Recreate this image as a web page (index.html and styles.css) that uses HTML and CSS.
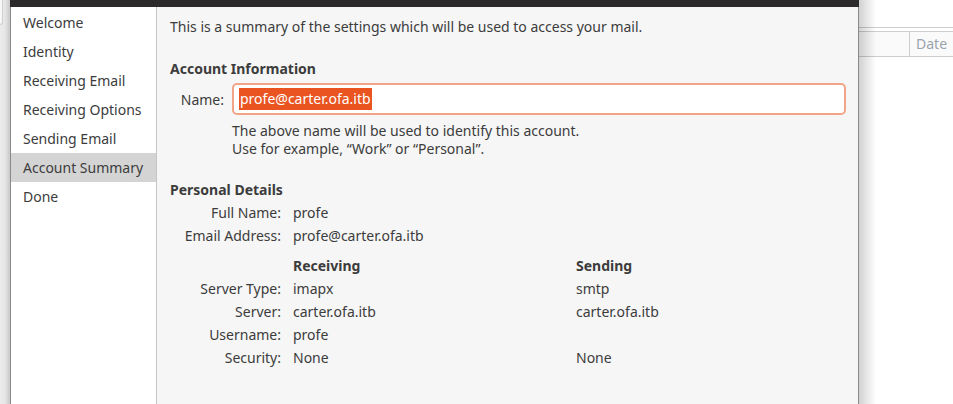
FILE: index.html
```html
<!DOCTYPE html>
<html>
<head>
<meta charset="utf-8">
<link rel="stylesheet" href="styles.css">
</head>
<body>
<div class="screen">
  <div class="bg-left"><div class="bg-box"></div></div>
  <div class="dialog">
    <div class="titlebar"></div>
    <div class="dialog-body">
      <ul class="sidebar">
        <li>Welcome</li>
        <li>Identity</li>
        <li>Receiving Email</li>
        <li>Receiving Options</li>
        <li>Sending Email</li>
        <li class="active">Account Summary</li>
        <li>Done</li>
      </ul>
      <div class="content">
        <p class="intro">This is a summary of the settings which will be used to access your mail.</p>
        <h2 class="section first">Account Information</h2>
        <div class="name-row">
          <label class="name-label">Name:</label>
          <div class="input"><span class="sel">profe@carter.ofa.itb</span></div>
        </div>
        <p class="hint">The above name will be used to identify this account.<br>Use for example, “Work” or “Personal”.</p>
        <h2 class="section">Personal Details</h2>
        <div class="details">
          <span class="lbl">Full Name:</span><span class="val">profe</span><span></span>
          <span class="lbl">Email Address:</span><span class="val">profe@carter.ofa.itb</span><span></span>
          <span class="lbl"></span><span class="val head">Receiving</span><span class="val head">Sending</span>
          <span class="lbl">Server Type:</span><span class="val">imapx</span><span class="val">smtp</span>
          <span class="lbl">Server:</span><span class="val">carter.ofa.itb</span><span class="val">carter.ofa.itb</span>
          <span class="lbl">Username:</span><span class="val">profe</span><span></span>
          <span class="lbl">Security:</span><span class="val">None</span><span class="val">None</span>
        </div>
      </div>
    </div>
  </div>
  <div class="bg-right">
    <div class="list-header">
      <div class="col-main"></div>
      <div class="col-date">Date</div>
    </div>
  </div>
</div>
</body>
</html>
```

FILE: styles.css
```css
html, body {
  margin: 0;
  padding: 0;
  width: 953px;
  height: 404px;
  overflow: hidden;
  background: #ffffff;
  font-family: "Noto Sans", "DejaVu Sans", sans-serif;
  font-size: 14px;
  color: #3c3c3c;
}

.screen {
  display: grid;
  grid-template-columns: 10px 849px 1fr;
  height: 404px;
}

/* left background */
.bg-left {
  background: linear-gradient(to right, #ececec 0%, #e6e6e6 50%, #c9c9c9 100%);
}
.bg-box {
  width: 2px;
  height: 24px;
  border: 1px solid #cfcfcf;
  border-left: none;
  border-top: none;
  border-bottom-right-radius: 3px;
  background: #f7f7f7;
}

/* dialog */
.dialog {
  display: flex;
  flex-direction: column;
  border-left: 1px solid #8a8a8a;
  border-right: 1px solid #8a8a8a;
  background: #f6f6f6;
}
.titlebar {
  height: 7px;
  background: #2c2a2a;
  margin-left: -1px;
  margin-right: -1px;
}
.dialog-body {
  flex: 1;
  display: flex;
}

.sidebar {
  list-style: none;
  margin: 0;
  padding: 1px 0 0 0;
  width: 145px;
  background: #ffffff;
  border-right: 1px solid #c4c4c4;
}
.sidebar li {
  height: 29px;
  line-height: 29px;
  padding-left: 12px;
  white-space: nowrap;
}
.sidebar li.active {
  background: #d4d4d4;
}

.content {
  flex: 1;
  padding: 10px 12px 0 13px;
}
.intro {
  margin: 0;
  line-height: 20px;
}
.section {
  margin: 22px 0 0 0;
  font-size: 14px;
  font-weight: bold;
  line-height: 20px;
}
.name-row {
  display: grid;
  grid-template-columns: 54px 1fr;
  column-gap: 8px;
  align-items: center;
  margin-top: 4px;
}
.name-label {
  text-align: right;
}
.input {
  height: 28px;
  border: 2px solid #f2a487;
  border-radius: 5px;
  background: #ffffff;
  display: flex;
  align-items: center;
  padding-left: 5px;
}
.sel {
  background: #e95420;
  color: #ffffff;
  line-height: 22px;
  padding: 0 1px;
}
.hint {
  margin: 7px 0 0 62px;
  line-height: 18px;
}
.details {
  margin-top: 1px;
  display: grid;
  grid-template-columns: 111px 271px 1fr;
  grid-template-rows: 23px 24px 29px repeat(4, 23px);
  column-gap: 12px;
  line-height: 23px;
}
.details .lbl {
  text-align: right;
}
.details .head {
  font-weight: bold;
  align-self: end;
}

/* right background (main window behind) */
.bg-right {
  position: relative;
  background: #ffffff;
}
.bg-right::before {
  content: "";
  position: absolute;
  left: 0;
  top: 0;
  bottom: 0;
  width: 17px;
  background: linear-gradient(to right, rgba(0,0,0,0.18), rgba(0,0,0,0));
  pointer-events: none;
}
.list-header {
  margin-top: 27px;
  border-top: 1px solid #cdcdcd;
  padding-top: 3px;
  display: flex;
}
.list-header > div {
  height: 24px;
  border-top: 1px solid #cdcdcd;
  border-bottom: 1px solid #cdcdcd;
  background: #fafafa;
}
.col-main {
  width: 50px;
  border-right: 1px solid #cdcdcd;
}
.col-date {
  flex: 1;
  padding-left: 6px;
  line-height: 24px;
  color: #9aa4ad;
}
```
